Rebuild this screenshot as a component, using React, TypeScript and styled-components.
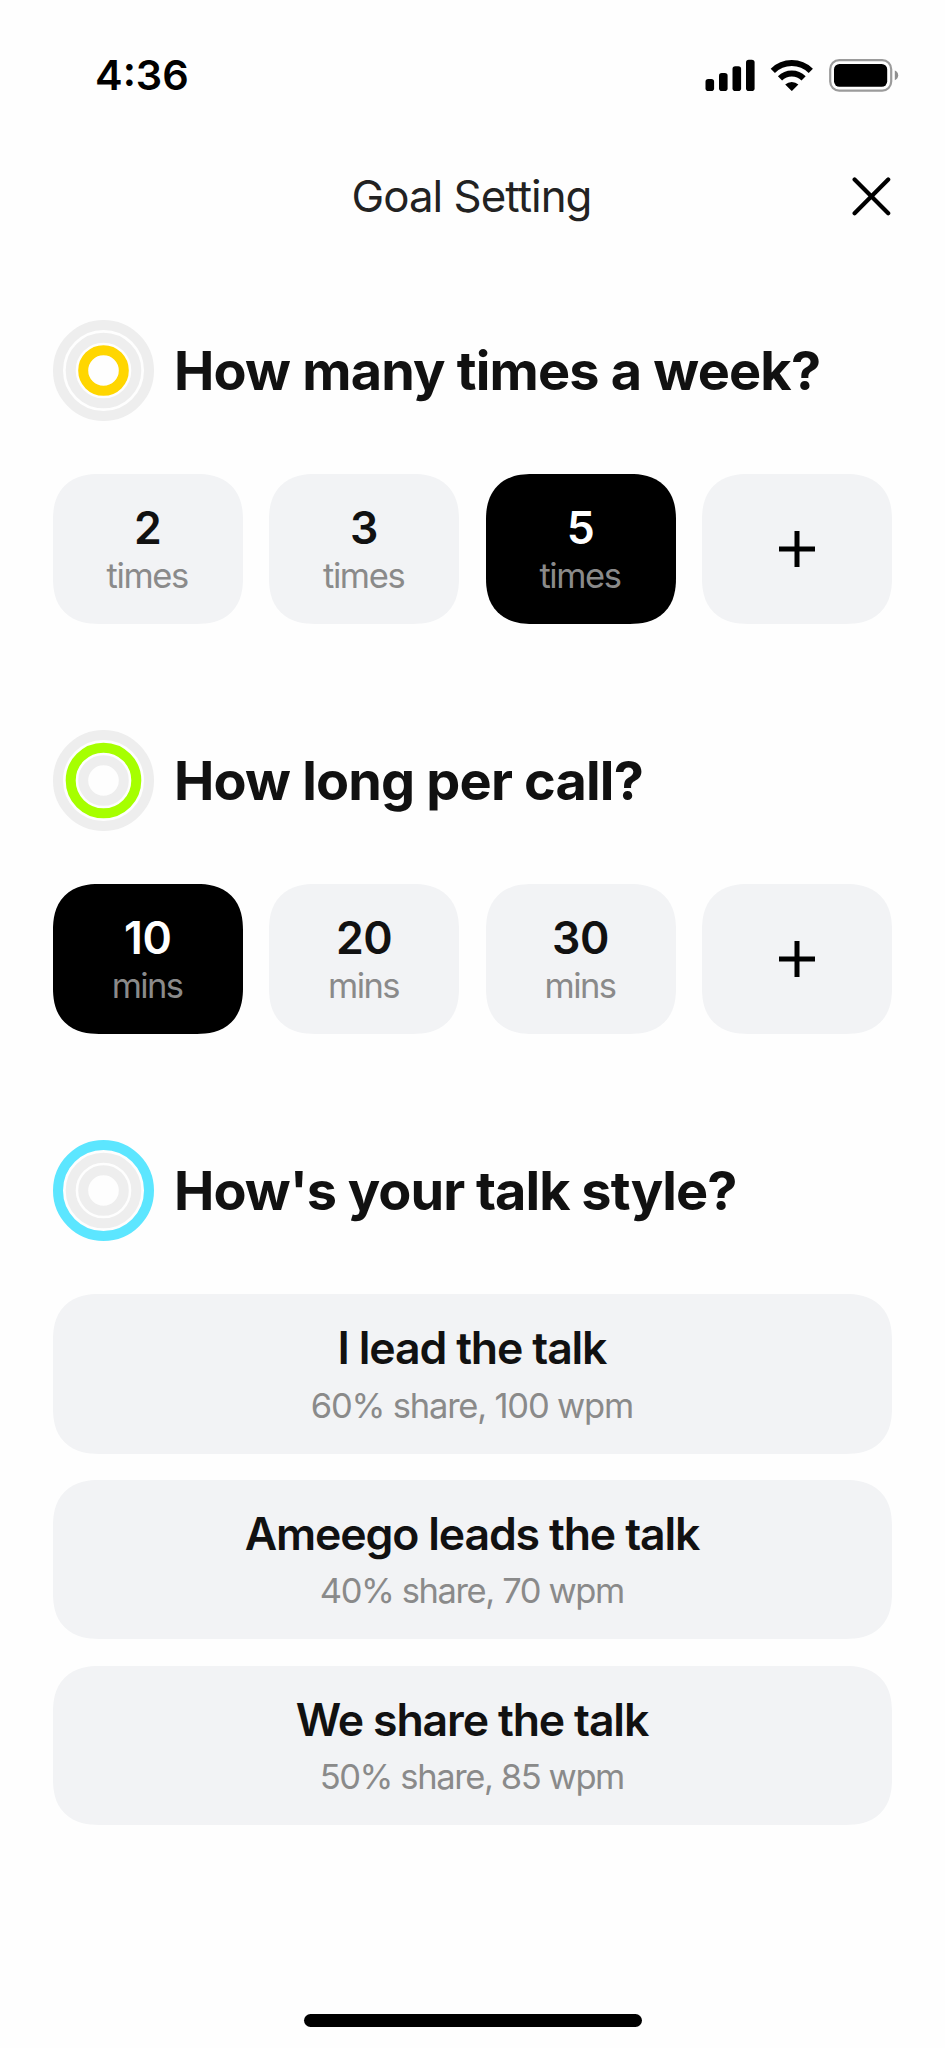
import React from "react";
import styled, { createGlobalStyle } from "styled-components";

const GlobalStyle = createGlobalStyle`
  * { box-sizing: border-box; }
  body { margin: 0; background: #fefefe; }
  button { font: inherit; border: 0; padding: 0; cursor: pointer; }
`;

const Screen = styled.main`
  width: 945px;
  height: 2048px;
  display: flex;
  flex-direction: column;
  background: #fefefe;
  color: #111;
  font-family: Inter, "Liberation Sans", sans-serif;
`;

const StatusBar = styled.header`
  height: 150px;
  padding: 50px 46px 50px 95px;
  display: flex;
  align-items: center;
  justify-content: space-between;
  color: #000;
`;

const Clock = styled.span`
  font-size: 41.5px;
  line-height: 50px;
  font-weight: 600;
`;

const TitleBar = styled.div`
  height: 94px;
  padding: 0 53px;
  display: grid;
  grid-template-columns: 38px 1fr 40px;
  align-items: center;
`;

const ScreenTitle = styled.h1`
  margin: 0;
  grid-column: 2;
  text-align: center;
  font-size: 43.8px;
  line-height: 54px;
  font-weight: 400;
  letter-spacing: -0.95px;
  color: #222;
`;

const CloseButton = styled.button`
  width: 40px;
  height: 40px;
  background: none;
  display: flex;
`;

const Content = styled.div`
  flex: 1;
  padding: 76px 53px 0;
  display: flex;
  flex-direction: column;
  gap: 106px;
`;

const Section = styled.section`
  display: flex;
  flex-direction: column;
  gap: 53px;
`;

const SectionHead = styled.div`
  height: 101px;
  display: flex;
  align-items: center;
  gap: 20px;
`;

const Question = styled.h2<{ $tracking: number }>`
  margin: 0;
  font-size: 54px;
  line-height: 66px;
  font-weight: 700;
  white-space: nowrap;
  letter-spacing: ${(p) => p.$tracking}px;
`;

const TileRow = styled.div`
  display: grid;
  grid-template-columns: repeat(4, 1fr);
  gap: 26.7px;
`;

const Tile = styled.button<{ $selected?: boolean }>`
  height: 150px;
  border-radius: 39px;
  display: flex;
  flex-direction: column;
  align-items: center;
  justify-content: center;
  background: ${(p) => (p.$selected ? "#000" : "#f2f3f5")};
  color: ${(p) => (p.$selected ? "#fff" : "#111")};

  @supports (corner-shape: superellipse(1.25)) {
    border-radius: 46px;
    corner-shape: superellipse(1.25);
  }
`;

const CardList = styled.div`
  display: flex;
  flex-direction: column;
  gap: 26.3px;
`;

const Card = styled(Tile)`
  height: 159.5px;
  gap: 9.5px;
`;

/* The end margin gives back the tracking applied after the last letter. */
const Label = styled.span<{ $tracking: number }>`
  font-size: 44.6px;
  line-height: 54px;
  font-weight: 600;
  letter-spacing: ${(p) => p.$tracking}px;
  margin-right: ${(p) => -p.$tracking}px;
`;

const Detail = styled.span<{ $tracking: number }>`
  font-size: 34.5px;
  line-height: 42px;
  font-weight: 400;
  color: #8a8a8a;
  letter-spacing: ${(p) => p.$tracking}px;
  margin-right: ${(p) => -p.$tracking}px;
`;

const HomeArea = styled.footer`
  height: 34px;
  display: flex;
  justify-content: center;
`;

const HomeIndicator = styled.div`
  width: 338px;
  height: 13px;
  border-radius: 7px;
  background: #000;
`;

const StatusIcons = () => (
  <svg width="194" height="34" viewBox="705 57 194 34">
    <rect x="705.5" y="78" width="8.6" height="12" rx="2.8" />
    <rect x="719" y="72" width="8.6" height="18" rx="2.8" />
    <rect x="732.5" y="65.3" width="8.6" height="24.7" rx="2.8" />
    <rect x="746" y="58.8" width="8.6" height="31.2" rx="2.8" />
    <g fill="none" stroke="#000" strokeWidth="6">
      <path d="M772.8 69.8 A27 27 0 0 1 810.8 69.8" />
      <path d="M780 77.3 A17 17 0 0 1 803.6 77.3" />
    </g>
    <path d="M785.2 83.6 A9.6 9.6 0 0 1 798.4 83.6 L792.4 89.6 Q791.8 90.2 791.2 89.6 Z" />
    <rect x="830.2" y="59.2" width="61" height="30.4" rx="9" fill="none" stroke="#9b9b9b" strokeWidth="2.2" />
    <rect x="834" y="63" width="53.2" height="22.8" rx="5.5" />
    <path d="M894.8 69.5 Q898.2 71 898.2 74.3 Q898.2 77.7 894.8 79.2 Z" fill="#8f8f8f" />
  </svg>
);

const CloseIcon = () => (
  <svg width="40" height="40" viewBox="0 0 40 40" stroke="#000" strokeWidth="4.2" strokeLinecap="round">
    <path d="M2.6 2.6 L36.2 36.2 M36.2 2.6 L2.6 36.2" />
  </svg>
);

const PlusIcon = () => (
  <svg width="36" height="36" viewBox="0 0 36 36" stroke="#000" strokeWidth="5">
    <path d="M0 18 H36 M18 0 V36" />
  </svg>
);

const Rings = ({ active, color }: { active: number; color: string }) => (
  <svg width="101" height="101" viewBox="0 0 101 101" fill="none" strokeWidth="10">
    {[20.3, 32.8, 45.5].map((r, i) => (
      <circle key={r} cx="50.5" cy="50.5" r={r} stroke={i === active ? color : "#eee"} />
    ))}
  </svg>
);

const amounts = [
  { question: "How many times a week?", tracking: -0.81, ring: 0, color: "#ffd600", unit: "times", unitTracking: -1.4, values: ["2", "3", "5"], selected: "5" },
  { question: "How long per call?", tracking: -0.82, ring: 1, color: "#a6ff00", unit: "mins", unitTracking: -1.6, values: ["10", "20", "30"], selected: "10" },
];

const talkStyles = [
  { title: "I lead the talk", detail: "60% share, 100 wpm", tracking: -1.2 },
  { title: "Ameego leads the talk", detail: "40% share, 70 wpm", tracking: -1.4 },
  { title: "We share the talk", detail: "50% share, 85 wpm", tracking: -1.4 },
];

export default function App() {
  return (
    <Screen>
      <GlobalStyle />
      <StatusBar>
        <Clock>4:36</Clock>
        <StatusIcons />
      </StatusBar>
      <TitleBar>
        <ScreenTitle>Goal Setting</ScreenTitle>
        <CloseButton aria-label="Close"><CloseIcon /></CloseButton>
      </TitleBar>
      <Content>
        {amounts.map((a) => (
          <Section key={a.question}>
            <SectionHead>
              <Rings active={a.ring} color={a.color} />
              <Question $tracking={a.tracking}>{a.question}</Question>
            </SectionHead>
            <TileRow>
              {a.values.map((v) => (
                <Tile key={v} $selected={v === a.selected}>
                  <Label $tracking={-0.4}>{v}</Label>
                  <Detail $tracking={a.unitTracking}>{a.unit}</Detail>
                </Tile>
              ))}
              <Tile aria-label="Custom"><PlusIcon /></Tile>
            </TileRow>
          </Section>
        ))}
        <Section>
          <SectionHead>
            <Rings active={2} color="#5ce6ff" />
            <Question $tracking={-0.96}>How's your talk style?</Question>
          </SectionHead>
          <CardList>
            {talkStyles.map((s) => (
              <Card key={s.title}>
                <Label $tracking={-1.15}>{s.title}</Label>
                <Detail $tracking={s.tracking}>{s.detail}</Detail>
              </Card>
            ))}
          </CardList>
        </Section>
      </Content>
      <HomeArea><HomeIndicator /></HomeArea>
    </Screen>
  );
}
